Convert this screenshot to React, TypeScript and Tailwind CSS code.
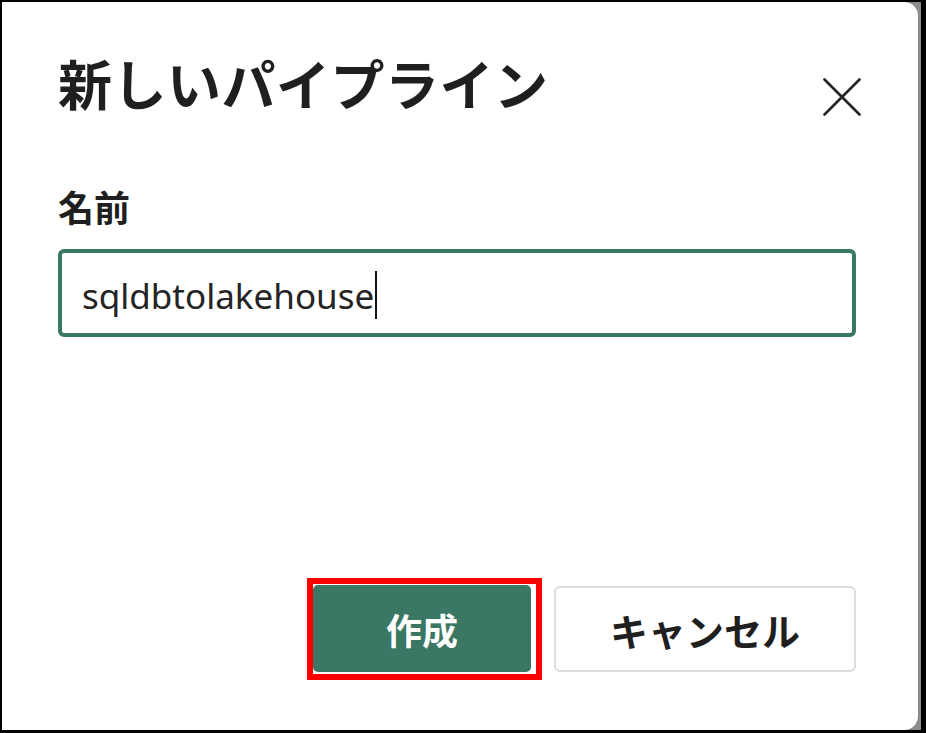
export default function App() {
  const jp = { fontFamily: '"Noto Sans CJK JP", "Noto Sans", sans-serif' };

  return (
    <div className="w-[926px] h-[733px] bg-black p-[2px] pr-[5px] pb-[3px]">
      <div className="h-full bg-[#8c8c8c] pr-[3px]">
        <div className="h-full bg-white rounded-r-[14px] flex flex-col pl-[56px] pr-[62px] pt-[45px]" style={jp}>
          {/* Header */}
          <div className="flex items-start justify-between">
            <h1 className="text-[54px] font-bold text-[#1f1f1f] leading-[72px] tracking-[0.5px]">新しいパイプライン</h1>
            <button className="mt-[31px] -mr-[5px] text-[#242424]" aria-label="閉じる">
              <svg width="38" height="38" viewBox="0 0 38 38" fill="none" stroke="currentColor" strokeWidth="2.6" strokeLinecap="round">
                <path d="M1.5 1.5L36.5 36.5M36.5 1.5L1.5 36.5" />
              </svg>
            </button>
          </div>

          {/* Name field */}
          <label className="mt-[65px] text-[36px] font-bold text-[#1f1f1f] leading-[44px]">名前</label>
          <div className="mt-[21px] h-[88px] border-4 border-[#3a7866] rounded-[6px] flex items-center pl-[20px]">
            <span
              className="mt-[6px] text-[35px] text-[#242424]"
              style={{ fontFamily: '"Noto Sans", "Open Sans", sans-serif' }}
            >
              sqldbtolakehouse
            </span>
            <span className="ml-[1px] mt-[4px] w-[2px] h-[48px] bg-[#111]" />
          </div>

          {/* Footer */}
          <div className="mt-auto mb-[50px] flex items-center justify-end gap-[12px]">
            <div className="border-[6px] border-[#ff0000] pl-[0px] pt-[1px] pr-[5px] pb-[2px]">
              <button className="w-[218px] h-[87px] bg-[#3a7764] rounded-[5px] text-white text-[36px] font-bold">
                作成
              </button>
            </div>
            <button className="w-[302px] h-[86px] border-2 border-[#dcdcdc] rounded-[6px] bg-white text-[#1f1f1f] text-[38px] font-bold">
              キャンセル
            </button>
          </div>
        </div>
      </div>
    </div>
  );
}
